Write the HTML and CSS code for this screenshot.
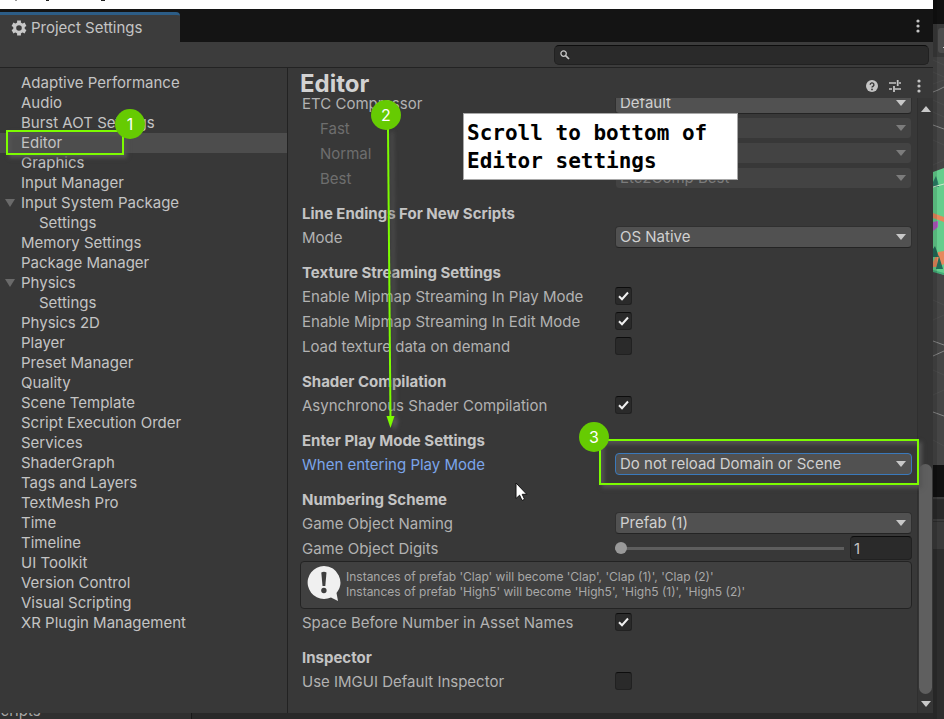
FILE: index.html
```html
<!DOCTYPE html>
<html lang="en">
<head>
<meta charset="utf-8">
<title>Project Settings</title>
<link rel="stylesheet" href="styles.css">
</head>
<body>
<svg width="0" height="0" class="defs" aria-hidden="true">
  <symbol id="arrow" viewBox="0 0 10 6"><path d="M0 0h10L5 6z" fill="currentColor"/></symbol>
  <symbol id="dots" viewBox="0 0 4 14"><g fill="#c4c4c4"><circle cx="2" cy="2" r="1.6"/><circle cx="2" cy="7" r="1.6"/><circle cx="2" cy="12" r="1.6"/></g></symbol>
</svg>

<div class="screen">
  <div class="page-top"><svg width="120" height="2" viewBox="0 0 120 2" aria-hidden="true"><path d="M15 0h2v1h-2z" fill="#999"/><path d="M46 0h3v1h-3zM101 0h4v1h-4z" fill="#222"/></svg></div>

  <main class="window">
    <div class="tabbar">
      <button class="tab" type="button">
        <svg width="16" height="16" viewBox="0 0 16 16" aria-hidden="true"><g fill="none" stroke="#c8c8c8"><circle cx="8" cy="8" r="4.300" stroke-width="3"/><path stroke-width="3.800" d="M8 .5v3M8 12.500v3M1.500 4.250l2.600 1.500M11.900 10.250l2.600 1.500M1.500 11.750l2.600-1.500M11.900 5.750l2.600-1.500"/></g></svg>
        <span>Project Settings</span>
      </button>
      <button class="icon-btn" type="button" aria-label="Window menu"><svg width="4" height="14"><use href="#dots"/></svg></button>
    </div>
    <div class="toolbar">
      <label class="search">
        <svg width="10" height="10" viewBox="0 0 10 10" aria-hidden="true"><circle cx="3.600" cy="3.600" r="2.700" fill="none" stroke="#c4c4c4" stroke-width="1.300"/><path d="M5.600 5.600L9 9" stroke="#c4c4c4" stroke-width="1.700"/></svg>
        <input type="text" aria-label="Search settings">
      </label>
    </div>

    <div class="body">
      <nav class="sidebar">
        <a href="#">Adaptive Performance</a>
        <a href="#">Audio</a>
        <a href="#">Burst AOT Settings</a>
        <a href="#" class="selected">Editor</a>
        <a href="#">Graphics</a>
        <a href="#">Input Manager</a>
        <a href="#" class="parent"><svg width="10" height="8" viewBox="0 0 10 8"><path d="M0 0h10L5 8z" fill="currentColor"/></svg>Input System Package</a>
        <a href="#" class="child">Settings</a>
        <a href="#">Memory Settings</a>
        <a href="#">Package Manager</a>
        <a href="#" class="parent"><svg width="10" height="8" viewBox="0 0 10 8"><path d="M0 0h10L5 8z" fill="currentColor"/></svg>Physics</a>
        <a href="#" class="child">Settings</a>
        <a href="#">Physics 2D</a>
        <a href="#">Player</a>
        <a href="#">Preset Manager</a>
        <a href="#">Quality</a>
        <a href="#">Scene Template</a>
        <a href="#">Script Execution Order</a>
        <a href="#">Services</a>
        <a href="#">ShaderGraph</a>
        <a href="#">Tags and Layers</a>
        <a href="#">TextMesh Pro</a>
        <a href="#">Time</a>
        <a href="#">Timeline</a>
        <a href="#">UI Toolkit</a>
        <a href="#">Version Control</a>
        <a href="#">Visual Scripting</a>
        <a href="#">XR Plugin Management</a>
      </nav>

      <section class="pane">
        <header class="pane-head">
          <h1>Editor</h1>
          <div class="head-icons">
            <button class="icon-btn" type="button" aria-label="Help"><svg width="12" height="12" viewBox="0 0 12 12"><circle cx="6" cy="6" r="6" fill="#c4c4c4"/><path d="M4.200 4.800a1.850 1.850 0 1 1 2.800 1.500c-.7.400-1 .6-1 1.300" fill="none" stroke="#383838" stroke-width="1.400"/><circle cx="6" cy="9.400" r=".9" fill="#383838"/></svg></button>
            <button class="icon-btn" type="button" aria-label="Presets"><svg width="12" height="12" viewBox="0 0 12 12"><path d="M0 3h7M10 3h2M0 9h3M6 9h6" stroke="#c4c4c4" stroke-width="1.400"/><path d="M8.700 0v6M5 6v6" stroke="#c4c4c4" stroke-width="1.800"/></svg></button>
            <button class="icon-btn" type="button" aria-label="Editor menu"><svg width="4" height="14"><use href="#dots"/></svg></button>
          </div>
        </header>

        <div class="scroller">
          <form class="fields">
            <div class="row"><label for="etc">ETC Compressor</label><span class="pick"><select id="etc"><option>Default</option></select><svg width="10" height="6"><use href="#arrow"/></svg></span></div>
            <div class="row sub off"><label for="fast">Fast</label><span class="pick"><select id="fast" disabled><option>etcpak</option></select><svg width="10" height="6"><use href="#arrow"/></svg></span></div>
            <div class="row sub off"><label for="normal">Normal</label><span class="pick"><select id="normal" disabled><option>ETCPACK Fast</option></select><svg width="10" height="6"><use href="#arrow"/></svg></span></div>
            <div class="row sub off"><label for="best">Best</label><span class="pick"><select id="best" disabled><option>Etc2Comp Best</option></select><svg width="10" height="6"><use href="#arrow"/></svg></span></div>

            <h2>Line Endings For New Scripts</h2>
            <div class="row"><label for="mode">Mode</label><span class="pick"><select id="mode"><option>OS Native</option></select><svg width="10" height="6"><use href="#arrow"/></svg></span></div>

            <h2>Texture Streaming Settings</h2>
            <div class="row"><label for="mipplay">Enable Mipmap Streaming In Play Mode</label><span class="tick"><input type="checkbox" id="mipplay" checked><svg width="12" height="10" viewBox="0 0 12 10"><path d="M1 5.200l3 3L10 1.500"/></svg></span></div>
            <div class="row"><label for="mipedit">Enable Mipmap Streaming In Edit Mode</label><span class="tick"><input type="checkbox" id="mipedit" checked><svg width="12" height="10" viewBox="0 0 12 10"><path d="M1 5.200l3 3L10 1.500"/></svg></span></div>
            <div class="row"><label for="demand">Load texture data on demand</label><span class="tick"><input type="checkbox" id="demand"></span></div>

            <h2>Shader Compilation</h2>
            <div class="row"><label for="async">Asynchronous Shader Compilation</label><span class="tick"><input type="checkbox" id="async" checked><svg width="12" height="10" viewBox="0 0 12 10"><path d="M1 5.200l3 3L10 1.500"/></svg></span></div>

            <h2>Enter Play Mode Settings</h2>
            <div class="row active"><label for="play">When entering Play Mode</label><span class="pick"><select id="play"><option>Do not reload Domain or Scene</option></select><svg width="10" height="6"><use href="#arrow"/></svg></span></div>

            <h2>Numbering Scheme</h2>
            <div class="row"><label for="naming">Game Object Naming</label><span class="pick"><select id="naming"><option>Prefab (1)</option></select><svg width="10" height="6"><use href="#arrow"/></svg></span></div>
            <div class="row"><label for="digits">Game Object Digits</label><span class="slide"><input type="range" id="digits" min="1" max="5" value="1"><input type="text" value="1" aria-label="Game Object Digits value"></span></div>
            <div class="info">
              <svg width="34" height="36" viewBox="0 0 34 36" aria-hidden="true"><path d="M17 0a16.500 16.500 0 1 0 7 31.500l7 3.500-1.500-8A16.500 16.500 0 0 0 17 0z" fill="#f0f0f0"/><path d="M14.300 6.500q2.700-1.400 5.200 0L18.300 20h-2.800z" fill="#3e3e3e"/><circle cx="16.900" cy="24.500" r="2.700" fill="#3e3e3e"/></svg>
              <p>Instances of prefab 'Clap' will become 'Clap', 'Clap (1)', 'Clap (2)'<br>Instances of prefab 'High5' will become 'High5', 'High5 (1)', 'High5 (2)'</p>
            </div>
            <div class="row"><label for="space">Space Before Number in Asset Names</label><span class="tick"><input type="checkbox" id="space" checked><svg width="12" height="10" viewBox="0 0 12 10"><path d="M1 5.200l3 3L10 1.500"/></svg></span></div>

            <h2>Inspector</h2>
            <div class="row"><label for="imgui">Use IMGUI Default Inspector</label><span class="tick"><input type="checkbox" id="imgui"></span></div>
          </form>
          <div class="scrollbar">
            <svg class="up" width="10" height="6"><use href="#arrow"/></svg>
            <div class="track"><div class="thumb"></div></div>
            <svg width="10" height="6"><use href="#arrow"/></svg>
          </div>
        </div>
      </section>
    </div>
  </main>

  <aside class="scene">
    <svg width="11" height="719" viewBox="0 0 11 719" aria-hidden="true">
      <rect width="11" height="719" fill="#2d2d2d"/>
      <rect width="11" height="24" fill="#111"/>
      <rect y="24" width="11" height="33" fill="#393939"/>
      <rect x="5" y="28" width="8" height="25" rx="3" fill="#4c4c4c"/><path d="M10 47h1v1h-1z" fill="#ccc"/>
      <rect y="57" width="11" height="408" fill="#454545"/>
      <g stroke="#4d4d4d"><path d="M0 60l11 5M0 72l11 5M0 84l11-4M0 100l11 5M0 112l11 5M0 140l11 5M0 165l11-5M0 300l11 5M0 320l11-5M0 370l11 5M0 395l11-5M0 440l11 6"/></g>
      <g stroke="#858585"><path d="M0 92l5-2 6-3M0 125l11 4M0 341l11 4M0 356l11-5M0 412l11 4"/></g>
      <path d="M0 172l11-4v107L0 271z" fill="#64ce8d"/>
      <path d="M1 180l2-4 2 6 1 5H0v-5z" fill="#2c8067"/><path d="M0 187l11-3" stroke="#d1eacf"/>
      <path d="M0 213l11 4v5L0 218z" fill="#e6885c"/>
      <path d="M0 222l5-1v6l-5 4z" fill="#b25ac2"/>
      <path d="M5 252l6-1v13l-6 3H0v-5z" fill="#e6885c"/>
      <path d="M2 246l4 11H0v-8zM6 256l4 13H3z" fill="#226c58"/>
      <path d="M0 270l11 3v2L0 272z" fill="#43ad78"/>
      <rect y="465" width="11" height="32" fill="#111"/><rect y="497" width="11" height="2" fill="#3c3c3c"/>
      <rect y="500" width="11" height="19" fill="#292929"/><rect y="519" width="11" height="2" fill="#3c3c3c"/><rect y="522" width="11" height="27" fill="#3a3a3a"/>
      <rect width="4" height="719" fill="#000" opacity=".12"/>
    </svg>
  </aside>

  <div class="behind"><div class="behind-left"><span>Scripts</span></div></div>

  <div class="mark mark-editor"></div>
  <div class="mark mark-play"></div>
  <svg class="pointer-line" width="20" height="300" viewBox="0 0 20 300" aria-hidden="true"><g class="green"><path d="M8 0L10.500 290" stroke="#7cfc00" stroke-width="2"/><path d="M6.500 287h8L10.500 299z" fill="#7cfc00"/></g></svg>
  <div class="badge b1">1</div>
  <div class="badge b2">2</div>
  <div class="badge b3">3</div>
  <div class="note">Scroll to bottom of<br>Editor settings</div>
  <svg class="cursor" width="13" height="20" viewBox="0 0 13 20" aria-hidden="true"><path d="M1 1v15.500l3.600-3.300 2.400 5.300 2.600-1.200-2.400-5h4.600z" fill="#fff" stroke="#111"/></svg>
</div>
</body>
</html>
```
FILE: styles.css
```css
* { box-sizing: border-box; }
body { margin: 0; background: #2d2d2d; color: #c4c4c4; font: 15px/20px Inter, sans-serif; }
button, input, select { font: inherit; color: inherit; }
a { color: inherit; text-decoration: none; }
.defs { position: absolute; }

.screen {
  position: relative;
  display: grid;
  grid-template-columns: minmax(0, 1fr) 11px;
  grid-template-rows: 9px minmax(0, 1fr) 6px;
  height: 100vh;
  overflow: hidden;
}
.page-top { background: #fff; display: flex; }
.window { grid-column: 1; grid-row: 2; display: flex; flex-direction: column; background: #383838; min-height: 0; }
.scene { grid-column: 2; grid-row: 1 / 4; overflow: hidden; }
.scene svg { display: block; }
.behind { grid-column: 1; grid-row: 3; background: #292929; overflow: hidden; }
.behind-left { width: 192px; height: 100%; background: #303030; border-right: 1px solid #181818; display: flex; align-items: flex-end; }
.behind-left span { line-height: 20px; margin: 0 0 -2px -9px; color: #a8a8a8; }

.tabbar { height: 33px; flex: none; background: #141414; display: flex; justify-content: space-between; padding-right: 13px; }
.tab { width: 180px; margin-top: 3px; padding: 0 11px 2px; border: 0; border-top: 3px solid #2c5d87; border-radius: 0 4px 0 0; background: #3c3c3c; display: flex; align-items: center; gap: 4px; }
.icon-btn { border: 0; padding: 0; background: none; display: flex; align-items: center; }
.toolbar { height: 26px; flex: none; background: #3c3c3c; border-bottom: 1px solid #232323; display: flex; justify-content: flex-end; align-items: center; padding-right: 4px; }
.search { width: 375px; height: 20px; border: 1px solid #212121; border-top-color: #0d0d0d; border-radius: 5px; background: #2a2a2a; display: flex; align-items: center; gap: 4px; padding-left: 5px; }
.search input { flex: 1; min-width: 0; height: 16px; border: 0; outline: 0; background: none; padding: 0; }

.body { flex: 1; min-height: 0; display: grid; grid-template-columns: 288px minmax(0, 1fr); }
.sidebar { border-right: 1px solid #222; padding-top: 5px; display: flex; flex-direction: column; }
.sidebar a { padding-left: 21px; height: 20px; white-space: nowrap; }
.sidebar .selected { background: #4d4d4d; }
.sidebar .child { padding-left: 39px; }
.sidebar .parent { padding-left: 5px; display: flex; align-items: center; gap: 6px; }
.sidebar .parent svg { color: #6a6a6a; }

.pane { display: flex; flex-direction: column; min-height: 0; }
.pane-head { height: 30px; flex: none; display: flex; justify-content: space-between; align-items: flex-start; padding: 0 12px; }
h1 { margin: 0; font-size: 24px; line-height: 32px; font-weight: 700; color: #d2d2d2; }
.head-icons { display: flex; align-items: center; gap: 16px; padding-top: 6px; height: 30px; }
.head-icons .icon-btn:nth-child(2) { margin-left: -5px; }

.scroller { flex: 1; min-height: 0; display: grid; grid-template-columns: minmax(0, 1fr) 16px; overflow: hidden; }
.fields { margin: -7px 5px 0 12px; color: #b2b2b2; }
.row { height: 25px; display: grid; grid-template-columns: 313px minmax(0, 1fr); padding-left: 2px; }
.row label { line-height: 25px; white-space: nowrap; }
.sub label { padding-left: 18px; }
.off { color: #6e6e6e; }
h2 { margin: 0; padding: 11px 0 0 2px; font-size: 15px; line-height: 23px; font-weight: 700; color: #c4c4c4; }

.pick { position: relative; display: block; height: 22px; margin-top: 1px; }
.pick select { display: block; width: 100%; height: 22px; padding: 0 20px 0 4px; appearance: none; border: 1px solid #303030; border-bottom-color: #242424; border-radius: 4px; background: #515151; color: #d0d0d0; outline: 0; line-height: 20px; }
.pick svg { position: absolute; right: 6px; top: 8px; color: #c8c8c8; pointer-events: none; }
.off select { background: #434343; border-color: #383838; color: #7c7c7c; opacity: 1; }
.off svg { color: #7c7c7c; }
.active label { color: #7ba5ea; }
.active select { border-color: #3a79bb; }

.tick { position: relative; width: 17px; height: 18px; margin-top: 3px; }
.tick input { display: block; appearance: none; margin: 0; width: 17px; height: 18px; border: 1px solid #212121; border-top-color: #0d0d0d; border-radius: 3px; background: #2a2a2a; }
.tick svg { position: absolute; left: 3px; top: 4px; pointer-events: none; fill: none; stroke: #f0f0f0; stroke-width: 2; }

.slide { display: grid; grid-template-columns: minmax(0, 1fr) 62px; gap: 6px; }
.slide input { margin: 0; min-width: 0; }
.slide input[type=range] { appearance: none; height: 24px; background: none; }
.slide input[type=range]::-webkit-slider-runnable-track { height: 3px; background: #5e5e5e; }
.slide input[type=range]::-webkit-slider-thumb { appearance: none; width: 12px; height: 12px; margin-top: -5px; border-radius: 50%; background: #999; }
.slide input[type=text] { height: 24px; border: 1px solid #212121; border-top-color: #0d0d0d; border-radius: 4px; background: #2a2a2a; padding: 0 3px; color: #c4c4c4; }

.info { height: 48px; margin-bottom: 1px; border: 1px solid #232323; border-radius: 4px; background: #404040; display: flex; align-items: flex-start; gap: 5px; padding: 4px 6px; }
.info svg { flex: none; }
.info p { margin: 3px 0 0; font-size: 12px; line-height: 15px; white-space: nowrap; color: #a8a8a8; }

.scrollbar { border-left: 1px solid #2f2f2f; background: #353535; display: flex; flex-direction: column; align-items: center; gap: 7px; padding: 8px 0 6px; color: #c8c8c8; }
.scrollbar .up { transform: rotate(180deg); }
.track { flex: 1; display: flex; flex-direction: column; justify-content: flex-end; }
.thumb { width: 13px; height: 40%; border-radius: 7px; background: #5f5f5f; }

.mark { position: absolute; border: 2px solid #7cfc00; box-shadow: 3px 3px 4px #555, inset 3px 3px 4px #555; }
.mark-editor { left: 6px; top: 130px; width: 118px; height: 25px; }
.mark-play { left: 599px; top: 439px; width: 320px; height: 46px; }
.pointer-line { position: absolute; left: 380px; top: 129px; overflow: visible; }
.green { filter: drop-shadow(4px 3px 2px #5a5a5a); }
.badge { position: absolute; width: 30px; height: 30px; border-radius: 50%; background: #66cb02; color: #fff; font-size: 16px; line-height: 30px; text-align: center; }
.b1 { left: 115px; top: 109px; }
.b2 { left: 371px; top: 100px; }
.b3 { left: 579px; top: 422px; }
.note { position: absolute; left: 463px; top: 113px; width: 275px; height: 67px; padding: 5px 3px; border: 1px solid #a8a8a8; background: #fff; color: #000; font: bold 21px/28px "DejaVu Sans Mono", monospace; white-space: nowrap; }
.cursor { position: absolute; left: 515px; top: 482px; }
```
